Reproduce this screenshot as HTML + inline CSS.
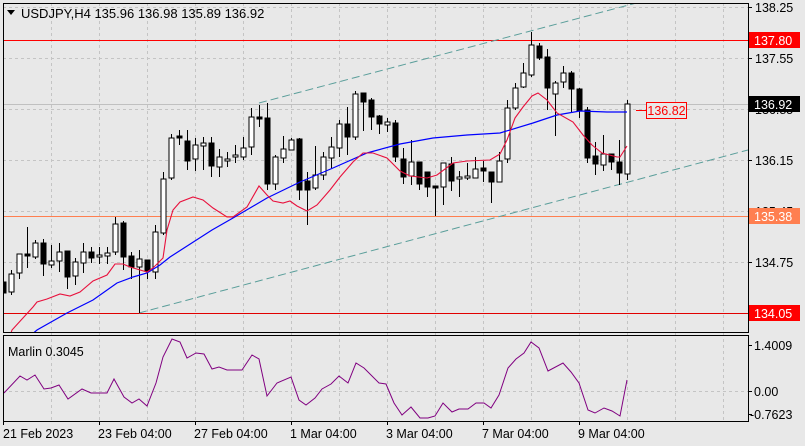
<!DOCTYPE html>
<html><head><meta charset="utf-8"><style>
html,body{margin:0;padding:0;background:#e8e8e8;width:805px;height:446px;overflow:hidden}
svg{display:block;font-family:"Liberation Sans",sans-serif}
</style></head><body>
<svg width="805" height="446" viewBox="0 0 805 446" xmlns="http://www.w3.org/2000/svg">
<rect width="805" height="446" fill="#e8e8e8"/>
<defs><clipPath id="c"><rect x="3" y="3" width="745" height="329"/></clipPath>
<clipPath id="c2"><rect x="3" y="335" width="745" height="86"/></clipPath></defs>
<g stroke="#c4c4c4" stroke-dasharray="3,3" stroke-width="1">
<line x1="3" y1="7.5" x2="748" y2="7.5"/><line x1="3" y1="58.5" x2="748" y2="58.5"/><line x1="3" y1="109.5" x2="748" y2="109.5"/><line x1="3" y1="160.5" x2="748" y2="160.5"/><line x1="3" y1="211.5" x2="748" y2="211.5"/><line x1="3" y1="262.5" x2="748" y2="262.5"/>
<line x1="3" y1="391.5" x2="748" y2="391.5"/>
<line x1="51.5" y1="3" x2="51.5" y2="421"/><line x1="99.5" y1="3" x2="99.5" y2="421"/><line x1="147.5" y1="3" x2="147.5" y2="421"/><line x1="195.5" y1="3" x2="195.5" y2="421"/><line x1="243.5" y1="3" x2="243.5" y2="421"/><line x1="291.5" y1="3" x2="291.5" y2="421"/><line x1="339.5" y1="3" x2="339.5" y2="421"/><line x1="387.5" y1="3" x2="387.5" y2="421"/><line x1="435.5" y1="3" x2="435.5" y2="421"/><line x1="483.5" y1="3" x2="483.5" y2="421"/><line x1="531.5" y1="3" x2="531.5" y2="421"/><line x1="579.5" y1="3" x2="579.5" y2="421"/><line x1="627.5" y1="3" x2="627.5" y2="421"/><line x1="675.5" y1="3" x2="675.5" y2="421"/><line x1="723.5" y1="3" x2="723.5" y2="421"/>
</g>
<line x1="3" y1="104.5" x2="748" y2="104.5" stroke="#c0c0c0"/>
<g clip-path="url(#c)">
<line x1="3" y1="40.5" x2="748" y2="40.5" stroke="#ff0000"/>
<line x1="3" y1="216.5" x2="748" y2="216.5" stroke="#ff7f50"/>
<line x1="3" y1="313.5" x2="748" y2="313.5" stroke="#e00000"/>
<g stroke="#5a9e9a" stroke-dasharray="8,4" stroke-width="1">
<line x1="259" y1="103" x2="640" y2="2"/>
<line x1="139" y1="313" x2="748" y2="150"/>
</g>
<g stroke="#000" stroke-width="1">
<line x1="3.5" y1="280" x2="3.5" y2="303"/><rect x="1" y="282" width="5" height="11" fill="#000"/>
<line x1="11.5" y1="270" x2="11.5" y2="295"/><rect x="9" y="274" width="5" height="18" fill="#fff"/>
<line x1="19.5" y1="254" x2="19.5" y2="279"/><rect x="17" y="254" width="5" height="19" fill="#fff"/>
<line x1="27.5" y1="227" x2="27.5" y2="268"/><rect x="25" y="254" width="5" height="2" fill="#000"/>
<line x1="35.5" y1="240" x2="35.5" y2="259"/><rect x="33" y="243" width="5" height="14" fill="#fff"/>
<line x1="43.5" y1="239" x2="43.5" y2="276"/><rect x="41" y="243" width="5" height="21" fill="#000"/>
<line x1="51.5" y1="245" x2="51.5" y2="268"/><rect x="49" y="261" width="5" height="4" fill="#fff"/>
<line x1="59.5" y1="243" x2="59.5" y2="272"/><rect x="57" y="252" width="5" height="9" fill="#fff"/>
<line x1="67.5" y1="251" x2="67.5" y2="289"/><rect x="65" y="251" width="5" height="26" fill="#000"/>
<line x1="75.5" y1="258" x2="75.5" y2="285"/><rect x="73" y="262" width="5" height="14" fill="#fff"/>
<line x1="83.5" y1="243" x2="83.5" y2="273"/><rect x="81" y="252" width="5" height="11" fill="#fff"/>
<line x1="91.5" y1="247" x2="91.5" y2="263"/><rect x="89" y="252" width="5" height="6" fill="#000"/>
<line x1="99.5" y1="247" x2="99.5" y2="264"/><rect x="97" y="255" width="5" height="2" fill="#fff"/>
<line x1="107.5" y1="247" x2="107.5" y2="264"/><rect x="105" y="253" width="5" height="3" fill="#fff"/>
<line x1="115.5" y1="217" x2="115.5" y2="255"/><rect x="113" y="224" width="5" height="28" fill="#fff"/>
<line x1="123.5" y1="221" x2="123.5" y2="270"/><rect x="121" y="223" width="5" height="34" fill="#000"/>
<line x1="131.5" y1="252" x2="131.5" y2="279"/><rect x="129" y="256" width="5" height="11" fill="#000"/>
<line x1="139.5" y1="250" x2="139.5" y2="313"/><rect x="137" y="259" width="5" height="8" fill="#fff"/>
<line x1="147.5" y1="260" x2="147.5" y2="279"/><rect x="145" y="260" width="5" height="11" fill="#000"/>
<line x1="155.5" y1="225" x2="155.5" y2="279"/><rect x="153" y="232" width="5" height="40" fill="#fff"/>
<line x1="163.5" y1="172" x2="163.5" y2="235"/><rect x="161" y="179" width="5" height="54" fill="#fff"/>
<line x1="171.5" y1="134" x2="171.5" y2="180"/><rect x="169" y="138" width="5" height="40" fill="#fff"/>
<line x1="179.5" y1="130" x2="179.5" y2="145"/><rect x="177" y="136" width="5" height="2" fill="#000"/>
<line x1="187.5" y1="130" x2="187.5" y2="170"/><rect x="185" y="141" width="5" height="20" fill="#000"/>
<line x1="195.5" y1="138" x2="195.5" y2="171"/><rect x="193" y="145" width="5" height="14" fill="#fff"/>
<line x1="203.5" y1="137" x2="203.5" y2="170"/><rect x="201" y="143" width="5" height="3" fill="#fff"/>
<line x1="211.5" y1="137" x2="211.5" y2="177"/><rect x="209" y="143" width="5" height="23" fill="#000"/>
<line x1="219.5" y1="149" x2="219.5" y2="177"/><rect x="217" y="157" width="5" height="10" fill="#fff"/>
<line x1="227.5" y1="152" x2="227.5" y2="167"/><rect x="225" y="159" width="5" height="2" fill="#fff"/>
<line x1="235.5" y1="145" x2="235.5" y2="163"/><rect x="233" y="155" width="5" height="2" fill="#fff"/>
<line x1="243.5" y1="137" x2="243.5" y2="160"/><rect x="241" y="148" width="5" height="9" fill="#fff"/>
<line x1="251.5" y1="108" x2="251.5" y2="155"/><rect x="249" y="117" width="5" height="30" fill="#fff"/>
<line x1="259.5" y1="105" x2="259.5" y2="127"/><rect x="257" y="117" width="5" height="2" fill="#000"/>
<line x1="267.5" y1="103" x2="267.5" y2="190"/><rect x="265" y="118" width="5" height="66" fill="#000"/>
<line x1="275.5" y1="155" x2="275.5" y2="190"/><rect x="273" y="157" width="5" height="27" fill="#fff"/>
<line x1="283.5" y1="136" x2="283.5" y2="163"/><rect x="281" y="149" width="5" height="9" fill="#fff"/>
<line x1="291.5" y1="138" x2="291.5" y2="150"/><rect x="289" y="140" width="5" height="10" fill="#fff"/>
<line x1="299.5" y1="138" x2="299.5" y2="200"/><rect x="297" y="139" width="5" height="51" fill="#000"/>
<line x1="307.5" y1="172" x2="307.5" y2="225"/><rect x="305" y="181" width="5" height="9" fill="#000"/>
<line x1="315.5" y1="146" x2="315.5" y2="190"/><rect x="313" y="175" width="5" height="13" fill="#fff"/>
<line x1="323.5" y1="152" x2="323.5" y2="180"/><rect x="321" y="157" width="5" height="18" fill="#fff"/>
<line x1="331.5" y1="137" x2="331.5" y2="168"/><rect x="329" y="147" width="5" height="11" fill="#fff"/>
<line x1="339.5" y1="120" x2="339.5" y2="157"/><rect x="337" y="124" width="5" height="24" fill="#fff"/>
<line x1="347.5" y1="107" x2="347.5" y2="155"/><rect x="345" y="124" width="5" height="13" fill="#000"/>
<line x1="355.5" y1="91" x2="355.5" y2="140"/><rect x="353" y="94" width="5" height="43" fill="#fff"/>
<line x1="363.5" y1="93" x2="363.5" y2="131"/><rect x="361" y="93" width="5" height="9" fill="#000"/>
<line x1="371.5" y1="98" x2="371.5" y2="130"/><rect x="369" y="100" width="5" height="17" fill="#000"/>
<line x1="379.5" y1="115" x2="379.5" y2="134"/><rect x="377" y="116" width="5" height="8" fill="#000"/>
<line x1="387.5" y1="118" x2="387.5" y2="132"/><rect x="385" y="122" width="5" height="3" fill="#fff"/>
<line x1="395.5" y1="120" x2="395.5" y2="162"/><rect x="393" y="123" width="5" height="34" fill="#000"/>
<line x1="403.5" y1="148" x2="403.5" y2="184"/><rect x="401" y="159" width="5" height="18" fill="#000"/>
<line x1="411.5" y1="140" x2="411.5" y2="185"/><rect x="409" y="162" width="5" height="14" fill="#fff"/>
<line x1="419.5" y1="162" x2="419.5" y2="190"/><rect x="417" y="162" width="5" height="22" fill="#000"/>
<line x1="427.5" y1="172" x2="427.5" y2="197"/><rect x="425" y="172" width="5" height="15" fill="#000"/>
<line x1="435.5" y1="186" x2="435.5" y2="216"/><rect x="433" y="186" width="5" height="2" fill="#000"/>
<line x1="443.5" y1="163" x2="443.5" y2="205"/><rect x="441" y="163" width="5" height="24" fill="#fff"/>
<line x1="451.5" y1="157" x2="451.5" y2="191"/><rect x="449" y="164" width="5" height="17" fill="#000"/>
<line x1="459.5" y1="171" x2="459.5" y2="197"/><rect x="457" y="177" width="5" height="2" fill="#fff"/>
<line x1="467.5" y1="163" x2="467.5" y2="180"/><rect x="465" y="176" width="5" height="2" fill="#fff"/>
<line x1="475.5" y1="157" x2="475.5" y2="178"/><rect x="473" y="169" width="5" height="9" fill="#fff"/>
<line x1="483.5" y1="161" x2="483.5" y2="182"/><rect x="481" y="168" width="5" height="3" fill="#000"/>
<line x1="491.5" y1="172" x2="491.5" y2="203"/><rect x="489" y="172" width="5" height="10" fill="#000"/>
<line x1="499.5" y1="152" x2="499.5" y2="182"/><rect x="497" y="161" width="5" height="21" fill="#fff"/>
<line x1="507.5" y1="100" x2="507.5" y2="163"/><rect x="505" y="108" width="5" height="51" fill="#fff"/>
<line x1="515.5" y1="83" x2="515.5" y2="110"/><rect x="513" y="88" width="5" height="20" fill="#fff"/>
<line x1="523.5" y1="63" x2="523.5" y2="88"/><rect x="521" y="73" width="5" height="14" fill="#fff"/>
<line x1="531.5" y1="32" x2="531.5" y2="77"/><rect x="529" y="45" width="5" height="30" fill="#fff"/>
<line x1="539.5" y1="43" x2="539.5" y2="60"/><rect x="537" y="46" width="5" height="12" fill="#000"/>
<line x1="547.5" y1="49" x2="547.5" y2="110"/><rect x="545" y="57" width="5" height="31" fill="#000"/>
<line x1="555.5" y1="81" x2="555.5" y2="136"/><rect x="553" y="83" width="5" height="11" fill="#fff"/>
<line x1="563.5" y1="66" x2="563.5" y2="88"/><rect x="561" y="73" width="5" height="9" fill="#fff"/>
<line x1="571.5" y1="71" x2="571.5" y2="112"/><rect x="569" y="73" width="5" height="16" fill="#000"/>
<line x1="579.5" y1="88" x2="579.5" y2="118"/><rect x="577" y="89" width="5" height="22" fill="#000"/>
<line x1="587.5" y1="107" x2="587.5" y2="163"/><rect x="585" y="110" width="5" height="48" fill="#000"/>
<line x1="595.5" y1="142" x2="595.5" y2="175"/><rect x="593" y="156" width="5" height="8" fill="#000"/>
<line x1="603.5" y1="135" x2="603.5" y2="171"/><rect x="601" y="154" width="5" height="11" fill="#fff"/>
<line x1="611.5" y1="154" x2="611.5" y2="170"/><rect x="609" y="154" width="5" height="8" fill="#000"/>
<line x1="619.5" y1="140" x2="619.5" y2="185"/><rect x="617" y="162" width="5" height="11" fill="#000"/>
<line x1="627.5" y1="100" x2="627.5" y2="180"/><rect x="625" y="104" width="5" height="70" fill="#fff"/>
</g>
<polyline fill="none" stroke="#0000ff" stroke-width="1.2" points="30,336 37,330 67,313 93,300 117,283 133,277 147,273 160,265 170,257 212,230 233,218 267,198 300,182 333,168 367,153 400,144 433,138 467,135 500,133 533,123 557,115 580,111 607,112 627,112"/>
<polyline fill="none" stroke="#e8103c" stroke-width="1.1" points="10,336 12,330 33,307 37,302 47,299 60,294 70,296 80,292 93,281 107,275 115,264 123,264 130,267 147,272 153,268 163,258 167,230 173,210 180,202 193,197 203,200 213,208 227,217 233,217 247,207 259,186 267,195 273,201 283,203 290,201 297,206 307,211 317,205 330,190 340,177 353,162 363,153 373,153 387,158 400,171 410,176 427,178 437,175 453,163 467,161 490,160 500,154 507,140 515,118 523,107 532,96 538,93 547,100 557,113 573,122 583,135 592,145 602,153 617,157 620,157 627,146"/>
</g>
<line x1="636" y1="110.5" x2="646" y2="110.5" stroke="#ff0000"/>
<rect x="646.5" y="102.5" width="40" height="16" fill="#e8e8e8" stroke="#ff0000"/>
<text x="666.5" y="115" font-size="12.5" fill="#ff0000" text-anchor="middle">136.82</text>
<g clip-path="url(#c2)">
<polyline fill="none" stroke="#800080" stroke-width="1" points="4,393 20,376 27,380 35,375 44,389 51,388 59,385 68,399 82,389 91,393 107,393 114,379 124,397 132,403 139,399 147,406 156,383 163,357 172,339 180,342 187,358 196,353 204,354 212,369 219,367 227,370 242,370 252,355 259,359 267,396 277,383 291,377 299,400 306,405 315,398 322,389 331,384 339,376 348,383 356,363 364,368 379,383 386,384 394,403 402,415 411,407 420,418 428,418 435,416 443,403 452,412 459,409 468,409 476,403 484,403 491,408 499,395 508,368 516,359 524,353 531,342 539,348 548,371 563,363 571,372 579,383 588,410 595,413 604,408 612,411 620,416 627,380"/>
</g>
<text x="8" y="356" font-size="12.5" fill="#000">Marlin 0.3045</text>
<rect x="3.5" y="3.5" width="745" height="329" fill="none" stroke="#000"/>
<rect x="3.5" y="335.5" width="745" height="86" fill="none" stroke="#000"/>
<path d="M7,10 L15,10 L11,15 Z" fill="#000"/>
<text x="21" y="18" font-size="13" fill="#000">USDJPY,H4  135.96 136.98 135.89 136.92</text>
<g stroke="#000"><line x1="748" y1="7.5" x2="752" y2="7.5"/><line x1="748" y1="58.5" x2="752" y2="58.5"/><line x1="748" y1="109.5" x2="752" y2="109.5"/><line x1="748" y1="160.5" x2="752" y2="160.5"/><line x1="748" y1="211.5" x2="752" y2="211.5"/><line x1="748" y1="262.5" x2="752" y2="262.5"/><line x1="748" y1="345.5" x2="752" y2="345.5"/><line x1="748" y1="391.5" x2="752" y2="391.5"/><line x1="748" y1="414.5" x2="752" y2="414.5"/></g>
<g font-size="12.5" fill="#000">
<text x="755" y="12">138.25</text>
<text x="755" y="63">137.55</text>
<text x="755" y="114">136.85</text>
<text x="755" y="165">136.15</text>
<text x="755" y="216">135.45</text>
<text x="755" y="267">134.75</text>
<text x="754" y="350">1.4009</text>
<text x="754" y="396">0.00</text>
<text x="750" y="419">-0.7623</text>
</g>
<rect x="749" y="32" width="51" height="16" fill="#ff0000"/><text x="754" y="45" font-size="12.5" fill="#fff">137.80</text>
<rect x="749" y="96" width="51" height="16" fill="#000"/><text x="754" y="109" font-size="12.5" fill="#fff">136.92</text>
<rect x="749" y="208" width="51" height="16" fill="#ff7f50"/><text x="754" y="221" font-size="12.5" fill="#fff">135.38</text>
<rect x="749" y="305" width="51" height="16" fill="#ff0000"/><text x="754" y="318" font-size="12.5" fill="#fff">134.05</text>
<g stroke="#000"><line x1="3.5" y1="421" x2="3.5" y2="425"/><line x1="99.5" y1="421" x2="99.5" y2="425"/><line x1="195.5" y1="421" x2="195.5" y2="425"/><line x1="291.5" y1="421" x2="291.5" y2="425"/><line x1="387.5" y1="421" x2="387.5" y2="425"/><line x1="483.5" y1="421" x2="483.5" y2="425"/><line x1="579.5" y1="421" x2="579.5" y2="425"/></g>
<g font-size="12.5" fill="#000">
<text x="3" y="438">21 Feb 2023</text>
<text x="98" y="438">23 Feb 04:00</text>
<text x="194" y="438">27 Feb 04:00</text>
<text x="290" y="438">1 Mar 04:00</text>
<text x="386" y="438">3 Mar 04:00</text>
<text x="482" y="438">7 Mar 04:00</text>
<text x="578" y="438">9 Mar 04:00</text>
</g>
</svg>
</body></html>
